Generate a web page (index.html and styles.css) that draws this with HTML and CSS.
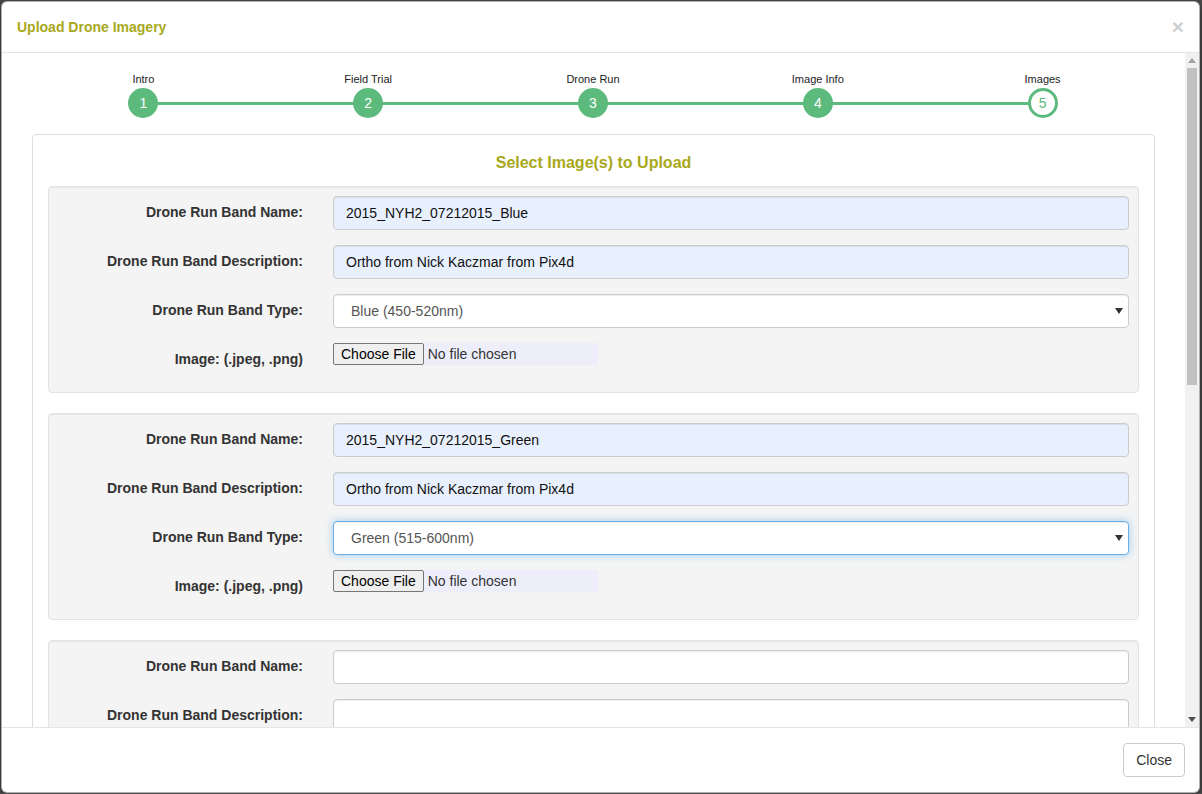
FILE: index.html
```html
<!DOCTYPE html>
<html lang="en">
<head>
<meta charset="utf-8">
<title>Upload Drone Imagery</title>
<link rel="stylesheet" href="styles.css">
</head>
<body>
<div class="modal">
  <div class="modal-header">
    <h4 class="modal-title">Upload Drone Imagery</h4>
    <span class="close">&times;</span>
  </div>
  <div class="modal-body">
    <div class="body-content">
      <div class="stepper">
        <div class="step"><span class="step-label">Intro</span><span class="step-circle">1</span></div>
        <div class="step"><span class="step-label">Field Trial</span><span class="step-circle">2</span></div>
        <div class="step"><span class="step-label">Drone Run</span><span class="step-circle">3</span></div>
        <div class="step"><span class="step-label">Image Info</span><span class="step-circle">4</span></div>
        <div class="step current"><span class="step-label">Images</span><span class="step-circle">5</span></div>
      </div>
      <div class="panel">
        <h3 class="panel-title">Select Image(s) to Upload</h3>

        <div class="well">
          <div class="form-group">
            <label class="control-label">Drone Run Band Name:</label>
            <input class="form-control autofill" type="text" value="2015_NYH2_07212015_Blue">
          </div>
          <div class="form-group">
            <label class="control-label">Drone Run Band Description:</label>
            <input class="form-control autofill" type="text" value="Ortho from Nick Kaczmar from Pix4d">
          </div>
          <div class="form-group">
            <label class="control-label">Drone Run Band Type:</label>
            <div class="select-wrap">
              <select class="form-control">
                <option>Blue (450-520nm)</option>
              </select>
              <svg class="select-arrow" width="8" height="6" viewBox="0 0 8 6"><path d="M0 0H8L4 6Z" fill="#333"/></svg>
            </div>
          </div>
          <div class="form-group file-row">
            <label class="control-label">Image: (.jpeg, .png)</label>
            <input class="file-input" type="file">
          </div>
        </div>

        <div class="well">
          <div class="form-group">
            <label class="control-label">Drone Run Band Name:</label>
            <input class="form-control autofill" type="text" value="2015_NYH2_07212015_Green">
          </div>
          <div class="form-group">
            <label class="control-label">Drone Run Band Description:</label>
            <input class="form-control autofill" type="text" value="Ortho from Nick Kaczmar from Pix4d">
          </div>
          <div class="form-group">
            <label class="control-label">Drone Run Band Type:</label>
            <div class="select-wrap">
              <select class="form-control focused">
                <option>Green (515-600nm)</option>
              </select>
              <svg class="select-arrow" width="8" height="6" viewBox="0 0 8 6"><path d="M0 0H8L4 6Z" fill="#333"/></svg>
            </div>
          </div>
          <div class="form-group file-row">
            <label class="control-label">Image: (.jpeg, .png)</label>
            <input class="file-input" type="file">
          </div>
        </div>

        <div class="well">
          <div class="form-group">
            <label class="control-label">Drone Run Band Name:</label>
            <input class="form-control" type="text" value="">
          </div>
          <div class="form-group">
            <label class="control-label">Drone Run Band Description:</label>
            <input class="form-control" type="text" value="">
          </div>
        </div>
      </div>
    </div>
    <div class="scrollbar">
      <span class="sb-btn"><svg width="8" height="5" viewBox="0 0 8 5"><path d="M0 5H8L4 0Z" fill="#a3a3a3"/></svg></span>
      <span class="sb-thumb"></span>
      <span class="sb-space"></span>
      <span class="sb-btn"><svg width="8" height="5" viewBox="0 0 8 5"><path d="M0 0H8L4 5Z" fill="#505050"/></svg></span>
    </div>
  </div>
  <div class="modal-footer">
    <button class="btn" type="button">Close</button>
  </div>
</div>
</body>
</html>
```

FILE: styles.css
```css
* { box-sizing: border-box; }

html, body {
  margin: 0;
  padding: 0;
  background: #4a4a4a;
  font-family: "Liberation Sans", Arial, Helvetica, sans-serif;
  font-size: 14px;
  color: #333;
  overflow: hidden;
}

.modal {
  margin: 1px 2px 0 1px;
  background: #fff;
  border: 1px solid rgba(0, 0, 0, 0.3);
  border-radius: 6px;
  overflow: hidden;
  box-shadow: 0 3px 9px rgba(0, 0, 0, 0.5);
}

.modal-header {
  display: flex;
  justify-content: space-between;
  align-items: center;
  height: 51px;
  padding: 0 15px;
  border-bottom: 1px solid #e5e5e5;
}

.modal-title {
  margin: 0;
  font-size: 14px;
  font-weight: bold;
  line-height: 20px;
  color: #a8a81b;
}

.close {
  font-size: 21px;
  font-weight: bold;
  line-height: 1;
  color: #cfcfcf;
  margin-top: -2px;
}

.modal-body {
  display: flex;
  height: 674px;
}

.body-content {
  flex: 1;
  overflow: hidden;
  padding: 20px 30px 0 30px;
}

/* stepper */
.stepper {
  display: grid;
  grid-template-columns: repeat(5, 1fr);
  margin: 0 0 0 -1px;
}

.step {
  position: relative;
  display: flex;
  flex-direction: column;
  align-items: center;
}

.step::before,
.step::after {
  content: "";
  position: absolute;
  top: 29px;
  height: 3px;
  background: #5dba7d;
}

.step::before { left: 0; right: 50%; }
.step::after { left: 50%; right: 0; }
.step:first-child::before { display: none; }
.step:last-child::after { display: none; }

.step-label {
  font-size: 11px;
  line-height: 13px;
  color: #222;
  margin-bottom: 2px;
}

.step-circle {
  position: relative;
  z-index: 1;
  width: 30px;
  height: 30px;
  border-radius: 50%;
  background: #5dba7d;
  color: #fff;
  font-size: 14px;
  line-height: 30px;
  text-align: center;
}

.step.current .step-circle {
  background: #fff;
  border: 3px solid #5dba7d;
  color: #5dba7d;
  line-height: 24px;
}

/* panel */
.panel {
  margin-top: 16px;
  border: 1px solid #ddd;
  border-radius: 4px;
  padding: 15px;
  background: #fff;
}

.panel-title {
  margin: 2px 0 12px;
  text-align: center;
  font-size: 16px;
  font-weight: bold;
  line-height: 22px;
  color: #a8a81b;
}

.well {
  background: #f4f4f4;
  border: 1px solid #e3e3e3;
  border-radius: 4px;
  padding: 9px 9px 0 9px;
  margin-bottom: 20px;
  box-shadow: inset 0 1px 1px rgba(0, 0, 0, 0.05);
}

.form-group {
  display: grid;
  grid-template-columns: 245px 1fr;
  column-gap: 30px;
  margin-bottom: 15px;
  align-items: start;
}

.file-row { min-height: 34px; }

.control-label {
  text-align: right;
  font-weight: bold;
  font-size: 14px;
  line-height: 20px;
  padding-top: 6px;
  color: #333;
}

.form-control {
  display: block;
  width: 100%;
  height: 34px;
  padding: 6px 12px;
  font-family: inherit;
  font-size: 14px;
  line-height: 20px;
  color: #111;
  background: #fff;
  border: 1px solid #ccc;
  border-radius: 4px;
  box-shadow: inset 0 1px 1px rgba(0, 0, 0, 0.075);
  outline: none;
}

.form-control.autofill { background: #e8f0fe; }

.select-wrap { position: relative; }

select.form-control {
  -webkit-appearance: none;
  appearance: none;
  padding-left: 17px;
  color: #555;
}

select.form-control.focused {
  border-color: #66afe9;
  box-shadow: inset 0 1px 1px rgba(0, 0, 0, 0.075), 0 0 8px rgba(102, 175, 233, 0.6);
}

.select-arrow {
  position: absolute;
  right: 6px;
  top: 14px;
}

.file-input {
  display: block;
  width: 265px;
  height: 22px;
  margin-top: 0;
  padding: 0;
  background: #eeeefb;
  font-family: inherit;
  font-size: 14px;
  line-height: 22px;
  color: #333;
  border: none;
}

.file-input::file-selector-button {
  height: 22px;
  margin: 0 4px 0 0;
  padding: 0 7px;
  font-family: inherit;
  font-size: 14px;
  color: #000;
  background: #efefef;
  border: 1px solid #767676;
  border-radius: 2px;
}

/* scrollbar */
.scrollbar {
  width: 14px;
  background: #f1f1f1;
  display: flex;
  flex-direction: column;
  align-items: center;
}

.sb-btn {
  height: 15px;
  width: 100%;
  display: flex;
  align-items: center;
  justify-content: center;
}

.sb-thumb {
  width: 10px;
  height: 317px;
  background: #c1c1c1;
}

.sb-space { flex: 1; }

/* footer */
.modal-footer {
  display: flex;
  justify-content: flex-end;
  padding: 15px 14px 15px 15px;
  border-top: 1px solid #e5e5e5;
}

.btn {
  font-family: inherit;
  font-size: 14px;
  line-height: 20px;
  padding: 6px 12px;
  color: #333;
  background: #fff;
  border: 1px solid #ccc;
  border-radius: 4px;
}
```
